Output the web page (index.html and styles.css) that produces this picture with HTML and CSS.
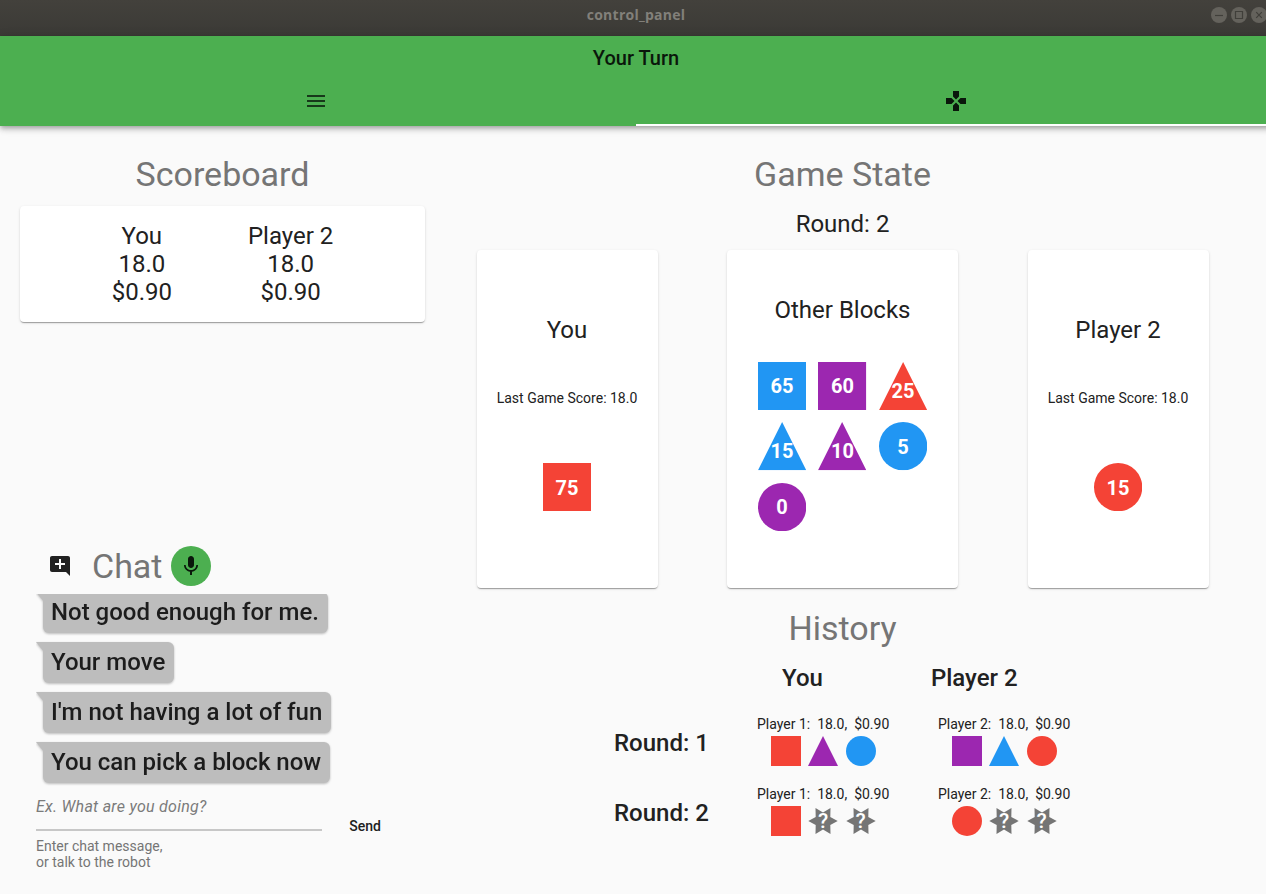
FILE: index.html
```html
<!DOCTYPE html>
<html lang="en">
<head>
<meta charset="utf-8">
<title>control_panel</title>
<link rel="stylesheet" href="styles.css">
</head>
<body>
<svg class="defs" width="0" height="0">
  <defs>
    <symbol id="square" viewBox="0 0 48 48"><path d="M0 0h48v48H0z"/></symbol>
    <symbol id="triangle" viewBox="0 0 48 48"><path d="M24 0l24 48H0z"/></symbol>
    <symbol id="circle" viewBox="0 0 48 48"><circle cx="24" cy="24" r="24"/></symbol>
    <symbol id="star" viewBox="0 0 30 30"><path d="M29.700 15L22.300 19L22.500 28L15 23.500L7.500 28L7.700 19L.3 15L7.700 11L7.500 2L15 6.500L22.500 2L22.300 11z"/></symbol>
  </defs>
</svg>
<div class="window">
  <div class="titlebar">
    <span class="window-name">control_panel</span>
    <div class="window-buttons">
      <svg width="16" height="16" viewBox="0 0 16 16"><circle cx="8" cy="8" r="8"/><path d="M4 8.5h8"/></svg>
      <svg width="16" height="16" viewBox="0 0 16 16"><circle cx="8" cy="8" r="8"/><path d="M4.500 4.500h7v7h-7z"/></svg>
      <svg width="16" height="16" viewBox="0 0 16 16"><circle cx="8" cy="8" r="8"/><path d="M5.200 5.200l5.600 5.600M10.800 5.200l-5.600 5.600"/></svg>
    </div>
  </div>
  <header class="appbar">
    <h1 class="turn">Your Turn</h1>
    <nav class="tabs">
      <div class="tab"><svg class="menu-icon" width="24" height="24" viewBox="0 0 24 24"><path d="M3 18h18v-2H3v2zm0-5h18v-2H3v2zm0-7v2h18V6H3z"/></svg></div>
      <div class="tab active"><svg width="24" height="24" viewBox="0 0 24 24"><path d="M15 7.500V2H9v5.500l3 3 3-3zM7.500 9H2v6h5.500l3-3-3-3zM9 16.500V22h6v-5.500l-3-3-3 3zM16.500 9l-3 3 3 3H22V9h-5.500z"/></svg></div>
    </nav>
  </header>
  <main class="content">
    <section class="left">
      <h2 class="heading">Scoreboard</h2>
      <div class="card scoreboard">
        <div>You<br>18.0<br>$0.90</div>
        <div>Player 2<br>18.0<br>$0.90</div>
      </div>
      <div class="chat">
        <div class="chat-head">
          <svg width="24" height="24" viewBox="0 0 24 24"><path d="M22 4c0-1.100-.9-2-2-2H4c-1.100 0-2 .9-2 2v12c0 1.100.9 2 2 2h14l4 4V4zm-5 7h-4v4h-2v-4H7V9h4V5h2v4h4v2z"/></svg>
          <h2 class="chat-title">Chat</h2>
          <div class="mic"><svg width="24" height="24" viewBox="0 0 24 24"><path d="M12 14c1.660 0 2.990-1.340 2.990-3L15 5c0-1.660-1.340-3-3-3S9 3.340 9 5v6c0 1.660 1.340 3 3 3zm5.300-3c0 3-2.540 5.100-5.300 5.100S6.700 14 6.700 11H5c0 3.410 2.720 6.230 6 6.720V21h2v-3.280c3.280-.48 6-3.300 6-6.720h-1.700z"/></svg></div>
        </div>
        <div class="messages">
          <div class="bubble">Not good enough for me.</div>
          <div class="bubble">Your move</div>
          <div class="bubble">I'm not having a lot of fun</div>
          <div class="bubble">You can pick a block now</div>
        </div>
        <div class="compose">
          <div class="field">
            <div class="hint">Ex. What are you doing?</div>
            <div class="helper">Enter chat message,<br>or talk to the robot</div>
          </div>
          <div class="send">Send</div>
        </div>
      </div>
    </section>
    <section class="right">
      <h2 class="heading">Game State</h2>
      <div class="round">Round: 2</div>
      <div class="boards">
        <div class="card player">
          <div class="name">You</div>
          <div class="last">Last Game Score: 18.0</div>
          <div class="block red"><svg><use href="#square"/></svg><span>75</span></div>
        </div>
        <div class="card others">
          <div class="name">Other Blocks</div>
          <div class="blocks">
            <div class="block blue"><svg><use href="#square"/></svg><span>65</span></div>
            <div class="block purple"><svg><use href="#square"/></svg><span>60</span></div>
            <div class="block red tri"><svg><use href="#triangle"/></svg><span>25</span></div>
            <div class="block blue tri"><svg><use href="#triangle"/></svg><span>15</span></div>
            <div class="block purple tri"><svg><use href="#triangle"/></svg><span>10</span></div>
            <div class="block blue"><svg><use href="#circle"/></svg><span>5</span></div>
            <div class="block purple"><svg><use href="#circle"/></svg><span>0</span></div>
          </div>
        </div>
        <div class="card player">
          <div class="name">Player 2</div>
          <div class="last">Last Game Score: 18.0</div>
          <div class="block red"><svg><use href="#circle"/></svg><span>15</span></div>
        </div>
      </div>
      <h2 class="heading history-title">History</h2>
      <div class="history">
        <div class="history-head"><span>You</span><span>Player 2</span></div>
        <div class="history-row">
          <div class="label">Round: 1</div>
          <div class="turn-cell">
            <div class="result">Player 1:&nbsp; 18.0,&nbsp; $0.90</div>
            <div class="picks"><svg class="red"><use href="#square"/></svg><svg class="purple"><use href="#triangle"/></svg><svg class="blue"><use href="#circle"/></svg></div>
          </div>
          <div class="turn-cell">
            <div class="result">Player 2:&nbsp; 18.0,&nbsp; $0.90</div>
            <div class="picks"><svg class="purple"><use href="#square"/></svg><svg class="blue"><use href="#triangle"/></svg><svg class="red"><use href="#circle"/></svg></div>
          </div>
        </div>
        <div class="history-row">
          <div class="label">Round: 2</div>
          <div class="turn-cell">
            <div class="result">Player 1:&nbsp; 18.0,&nbsp; $0.90</div>
            <div class="picks"><svg class="red"><use href="#square"/></svg><div class="unknown"><svg><use href="#star"/></svg><span>?</span></div><div class="unknown"><svg><use href="#star"/></svg><span>?</span></div></div>
          </div>
          <div class="turn-cell">
            <div class="result">Player 2:&nbsp; 18.0,&nbsp; $0.90</div>
            <div class="picks"><svg class="red"><use href="#circle"/></svg><div class="unknown"><svg><use href="#star"/></svg><span>?</span></div><div class="unknown"><svg><use href="#star"/></svg><span>?</span></div></div>
          </div>
        </div>
      </div>
    </section>
  </main>
</div>
</body>
</html>
```
FILE: styles.css
```css
* { box-sizing: border-box; }
html, body { margin: 0; height: 894px; overflow: hidden; }
body { background: #fafafa; color: #212121; font-family: Roboto, sans-serif; }
h1, h2 { margin: 0; font-weight: 400; }
svg { display: block; flex: none; }
.defs { position: absolute; }
.window { width: 1272px; height: 894px; display: flex; flex-direction: column; }

.titlebar { height: 36px; flex: none; background: linear-gradient(#43413c, #3b3a36); display: grid; grid-template-columns: 1fr auto 1fr; padding-top: 7px; }
.window-name { grid-column: 2; font: 700 14px/16px "Open Sans", sans-serif; letter-spacing: .25px; color: #82807a; }
.window-buttons { display: flex; gap: 4px; justify-content: flex-end; padding-right: 5px; }
.window-buttons circle { fill: #64625c; }
.window-buttons path { fill: none; stroke: #403f3a; stroke-width: 1.2; }

.appbar { height: 90px; flex: none; background: #4caf50; display: flex; flex-direction: column; box-shadow: 0 2px 4px -1px rgba(0,0,0,.2), 0 4px 5px rgba(0,0,0,.14), 0 1px 10px rgba(0,0,0,.12); position: relative; }
.turn { height: 44px; line-height: 44px; text-align: center; font-size: 20px; font-weight: 500; color: #0a170b; }
.tabs { flex: 1; display: grid; grid-template-columns: 1fr 1fr; }
.tab { display: flex; justify-content: center; padding: 9px 4px 0 0; border-bottom: 2px solid transparent; fill: #0a170b; }
.tab.active { border-color: #fff; padding: 9px 0 0 4px; }
.menu-icon { fill: #17381a; }

.content { flex: 1; display: flex; }
.left { width: 445px; padding: 28px 20px 0; display: flex; flex-direction: column; }
.right { width: 795px; padding-top: 28px; display: flex; flex-direction: column; align-items: center; }
.heading { height: 40px; line-height: 40px; font-size: 34px; color: #757575; text-align: center; }
.card { background: #fff; border-radius: 4px; box-shadow: 0 2px 1px -1px rgba(0,0,0,.2), 0 1px 1px rgba(0,0,0,.14), 0 1px 3px rgba(0,0,0,.12); }
.scoreboard { margin-top: 12px; height: 116px; padding: 16px 0 0 91.700px; display: flex; gap: 76px; font-size: 24px; line-height: 28px; text-align: center; }

.chat { margin-top: 224px; padding-left: 16px; }
.chat-head { display: flex; align-items: center; height: 40px; padding-left: 12px; fill: #212121; }
.chat-title { margin-left: 20px; width: 79px; font-size: 34px; line-height: 40px; color: #757575; }
.mic { width: 40px; height: 40px; border-radius: 50%; background: #4caf50; display: grid; place-items: center; fill: #0a170b; }
.messages { height: 192px; margin-top: 8px; overflow: hidden; display: flex; flex-direction: column; justify-content: flex-end; align-items: flex-start; gap: 9px; padding-bottom: 3px; }
.bubble { flex: none; height: 41px; padding: 0 9px 0 15px; font-size: 24px; line-height: 40px; font-weight: 500; white-space: nowrap; color: #1c1c1c; position: relative; z-index: 0; filter: drop-shadow(0 1px 1px rgba(0,0,0,.25)); }
.bubble::before { content: ""; position: absolute; z-index: -1; inset: 0 0 0 7px; background: #bdbdbd; border-radius: 0 6px 6px 6px; }
.bubble::after { content: ""; position: absolute; z-index: -1; left: 0; top: 0; width: 8px; height: 10px; background: #bdbdbd; clip-path: polygon(0 0, 100% 0, 100% 100%); }
.compose { display: flex; justify-content: space-between; padding: 9px 44px 0 0; }
.field { width: 286px; }
.hint { height: 36px; font-size: 16px; line-height: 24px; font-style: italic; letter-spacing: .26px; color: #7b7b7b; border-bottom: 2px solid #c7c7c7; }
.helper { margin-top: 7px; font-size: 14px; line-height: 16px; color: #757575; }
.send { padding-top: 23px; font-size: 14px; line-height: 16px; font-weight: 500; }

.round { margin-top: 16px; font-size: 24px; line-height: 28px; }
.boards { margin-top: 12px; display: flex; gap: 69.500px; }
.boards .card { height: 338px; display: flex; flex-direction: column; align-items: center; }
.player { width: 181px; padding-top: 66px; }
.others { width: 231px; padding-top: 46px; }
.name { font-size: 24px; line-height: 28px; }
.last { margin: 46px 0 57px; font-size: 14px; line-height: 16px; white-space: nowrap; }
.blocks { margin-top: 38px; display: grid; grid-template-columns: repeat(3, 48.300px); gap: 12.200px; }
.block { width: 48.300px; height: 48.300px; display: grid; place-items: center; }
.block > * { grid-area: 1 / 1; }
.block svg { width: 100%; height: 100%; }
.block span { color: #fff; font-size: 20px; line-height: 24px; font-weight: 700; z-index: 1; }
.player .block span { padding-top: 2px; }
.blocks .tri span { padding-top: 9px; }
.red { fill: #f44336; }
.blue { fill: #2196f3; }
.purple { fill: #9c27b0; }

.history-title { margin-top: 20px; }
.history { width: 457px; align-self: flex-start; margin: 16px 0 0 169px; }
.history-head { display: flex; gap: 108px; padding-left: 168px; font-size: 24px; line-height: 28px; font-weight: 500; }
.history-row { display: grid; grid-template-columns: 94px 132px 132px; column-gap: 49px; height: 70px; padding-top: 24px; }
.label { padding-top: 13px; font-size: 24px; line-height: 28px; font-weight: 500; white-space: nowrap; }
.result { font-size: 14px; line-height: 16px; white-space: nowrap; }
.picks { display: flex; gap: 7.500px; padding: 4px 0 0 13.700px; }
.picks svg { width: 30px; height: 30px; }
.unknown { display: grid; place-items: center; width: 30px; height: 30px; fill: #757575; }
.unknown > * { grid-area: 1 / 1; }
.unknown span { color: #fff; font-size: 21px; line-height: 24px; font-weight: 500; z-index: 1; }
```
